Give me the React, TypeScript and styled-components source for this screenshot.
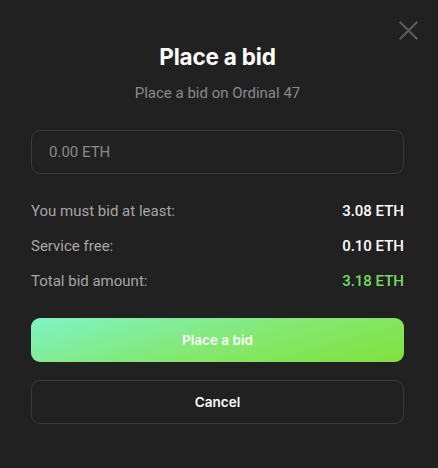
import React from "react";
import styled, { createGlobalStyle } from "styled-components";

const Global = createGlobalStyle`
  html, body { margin: 0; padding: 0; background: #212121; }
  body { font-family: Roboto, "Liberation Sans", sans-serif; }
  * { box-sizing: border-box; }
`;

const Modal = styled.div`
  position: relative;
  width: 438px;
  height: 468px;
  background: #212121;
  padding: 43px 34px 0 31px;
  display: flex;
  flex-direction: column;
`;

const Close = styled.button`
  position: absolute;
  top: 20px;
  right: 20px;
  width: 20px;
  height: 20px;
  padding: 0;
  border: none;
  background: transparent;
  display: flex;
  align-items: center;
  justify-content: center;
  cursor: pointer;
`;

const Title = styled.h1`
  margin: 0;
  text-align: center;
  font-family: Inter, "Liberation Sans", sans-serif;
  font-weight: 700;
  font-size: 22.5px;
  line-height: 28px;
  color: #ffffff;
  letter-spacing: -0.2px;
`;

const Subtitle = styled.p`
  margin: 12px 0 0;
  text-align: center;
  font-size: 15px;
  line-height: 20px;
  color: #8a8a8a;
`;

const Input = styled.input`
  margin-top: 27px;
  height: 44px;
  width: 100%;
  border: 1px solid #3a3a3a;
  border-radius: 9px;
  background: transparent;
  padding: 0 17px;
  font-family: Roboto, "Liberation Sans", sans-serif;
  font-size: 15px;
  color: #ffffff;
  outline: none;
  &::placeholder { color: #8a8a8a; }
`;

const Rows = styled.div`
  margin-top: 27px;
  display: flex;
  flex-direction: column;
  gap: 15px;
`;

const Row = styled.div`
  display: flex;
  justify-content: space-between;
  align-items: center;
  height: 20px;
  font-size: 15px;
`;

const Label = styled.span`
  color: #a6a6a6;
`;

const Value = styled.span<{ $accent?: boolean }>`
  font-weight: 500;
  color: ${(p) => (p.$accent ? "#73dd63" : "#ffffff")};
`;

const Button = styled.button<{ $primary?: boolean }>`
  height: 44px;
  width: 100%;
  border-radius: 9px;
  font-family: Inter, "Liberation Sans", sans-serif;
  font-weight: 600;
  font-size: 13.5px;
  color: #ffffff;
  cursor: pointer;
  border: ${(p) => (p.$primary ? "none" : "1px solid #3a3a3a")};
  background: ${(p) =>
    p.$primary ? "linear-gradient(165deg, #7ff3c6 0%, #84e86f 55%, #80e23c 100%)" : "transparent"};
`;

const Actions = styled.div`
  margin-top: 27px;
  display: flex;
  flex-direction: column;
  gap: 18px;
`;

export default function App() {
  return (
    <>
      <Global />
      <Modal>
        <Close aria-label="Close">
          <svg width="19" height="19" viewBox="0 0 19 19">
            <path d="M1.5 1.5 L17.5 17.5 M17.5 1.5 L1.5 17.5" stroke="#5a5a5a" strokeWidth="2.2" strokeLinecap="square" />
          </svg>
        </Close>
        <Title>Place a bid</Title>
        <Subtitle>Place a bid on Ordinal 47</Subtitle>
        <Input placeholder="0.00 ETH" />
        <Rows>
          <Row><Label>You must bid at least:</Label><Value>3.08 ETH</Value></Row>
          <Row><Label>Service free:</Label><Value>0.10 ETH</Value></Row>
          <Row><Label>Total bid amount:</Label><Value $accent>3.18 ETH</Value></Row>
        </Rows>
        <Actions>
          <Button $primary>Place a bid</Button>
          <Button>Cancel</Button>
        </Actions>
      </Modal>
    </>
  );
}
